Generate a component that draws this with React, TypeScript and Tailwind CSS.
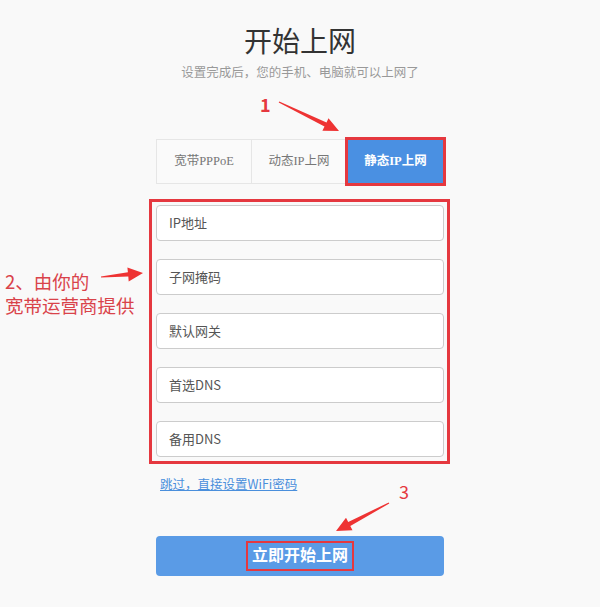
import React from "react";

const sans = { fontFamily: '"Microsoft YaHei", "Noto Sans CJK SC", sans-serif' };
const serif = { fontFamily: '"Liberation Serif", "Noto Sans CJK SC", serif' };

function arrow(x1: number, y1: number, x2: number, y2: number) {
  const dx = x2 - x1;
  const dy = y2 - y1;
  const len = Math.hypot(dx, dy);
  const ux = dx / len;
  const uy = dy / len;
  const nx = -uy;
  const ny = ux;
  const head = 15;
  const hw = 7;
  const bx = x2 - ux * head;
  const by = y2 - uy * head;
  const p = (x: number, y: number) => `${x.toFixed(1)},${y.toFixed(1)}`;
  return [
    p(x1 + nx * 0.6, y1 + ny * 0.6),
    p(bx + nx * 2.2, by + ny * 2.2),
    p(bx + nx * hw, by + ny * hw),
    p(x2, y2),
    p(bx - nx * hw, by - ny * hw),
    p(bx - nx * 2.2, by - ny * 2.2),
    p(x1 - nx * 0.6, y1 - ny * 0.6),
  ].join(" ");
}

const fields = ["IP地址", "子网掩码", "默认网关", "首选DNS", "备用DNS"];

export default function App() {
  return (
    <div className="relative h-[607px] w-[600px] overflow-hidden bg-[#f9f9f9]" style={sans}>
      <div className="mx-auto flex w-[288px] flex-col pt-[22px]">
        {/* Header */}
        <h1 className="text-center text-[28px] leading-[36px] font-normal text-[#333]">开始上网</h1>
        <p className="mt-[4px] text-center text-[12.5px] leading-[20px] whitespace-nowrap text-[#999]">
          设置完成后，您的手机、电脑就可以上网了
        </p>

        {/* Tabs */}
        <div className="mt-[57px] flex h-[45px] text-[12.5px]" style={serif}>
          <div className="flex w-[96px] items-center justify-center border border-[#e6e6e6] bg-[#fafafa] text-[#777]">
            宽带PPPoE
          </div>
          <div className="flex w-[95px] items-center justify-center border-y border-r border-[#e6e6e6] bg-[#fafafa] text-[#777]">
            动态IP上网
          </div>
          <div className="relative flex flex-1 items-center justify-center bg-[#4a90e2] font-bold text-white">
            静态IP上网
            <div className="absolute -inset-[2px] border-[3px] border-[#e5383f]" />
          </div>
        </div>

        {/* Fields */}
        <div className="relative mt-[21px] flex flex-col gap-[18px]">
          {fields.map((f) => (
            <div
              key={f}
              className="flex h-[36px] items-center rounded-[4px] border border-[#cccccc] bg-white px-[12px] text-[13px] text-[#555]"
            >
              {f}
            </div>
          ))}
          <div className="absolute -top-[6px] -right-[6px] -bottom-[7px] -left-[7px] border-[3px] border-[#e5383f]" />
        </div>

        <a className="mt-[17px] ml-[4px] text-[12.5px] leading-[20px] text-[#4a8fdc] underline">
          跳过，直接设置WiFi密码
        </a>

        {/* Submit */}
        <button className="mt-[42px] flex h-[40px] items-center justify-center rounded-[4px] bg-[#5a9be6]">
          <span
            className="border-2 border-[#e5383f] px-[4px] text-[16px] leading-[26px] font-bold text-white"
            style={serif}
          >
            立即开始上网
          </span>
        </button>
      </div>

      {/* Annotations */}
      <span className="absolute top-[91px] left-[260px] text-[18px] font-bold text-[#e5383f]">1</span>
      <span className="absolute top-[478px] left-[399px] text-[18px] text-[#e5383f]">3</span>
      <div className="absolute top-[269px] left-[5px] text-[18.5px] leading-[24px] text-[#d9434a]">
        <div>2、由你的</div>
        <div>宽带运营商提供</div>
      </div>
      <svg className="pointer-events-none absolute inset-0" width="600" height="607">
        <polygon points={arrow(279, 102, 339, 131)} fill="#ee3333" />
        <polygon points={arrow(389, 503, 336, 531)} fill="#ee3333" />
        <polygon points={arrow(101, 277, 143, 273)} fill="#ee3333" />
      </svg>
    </div>
  );
}
